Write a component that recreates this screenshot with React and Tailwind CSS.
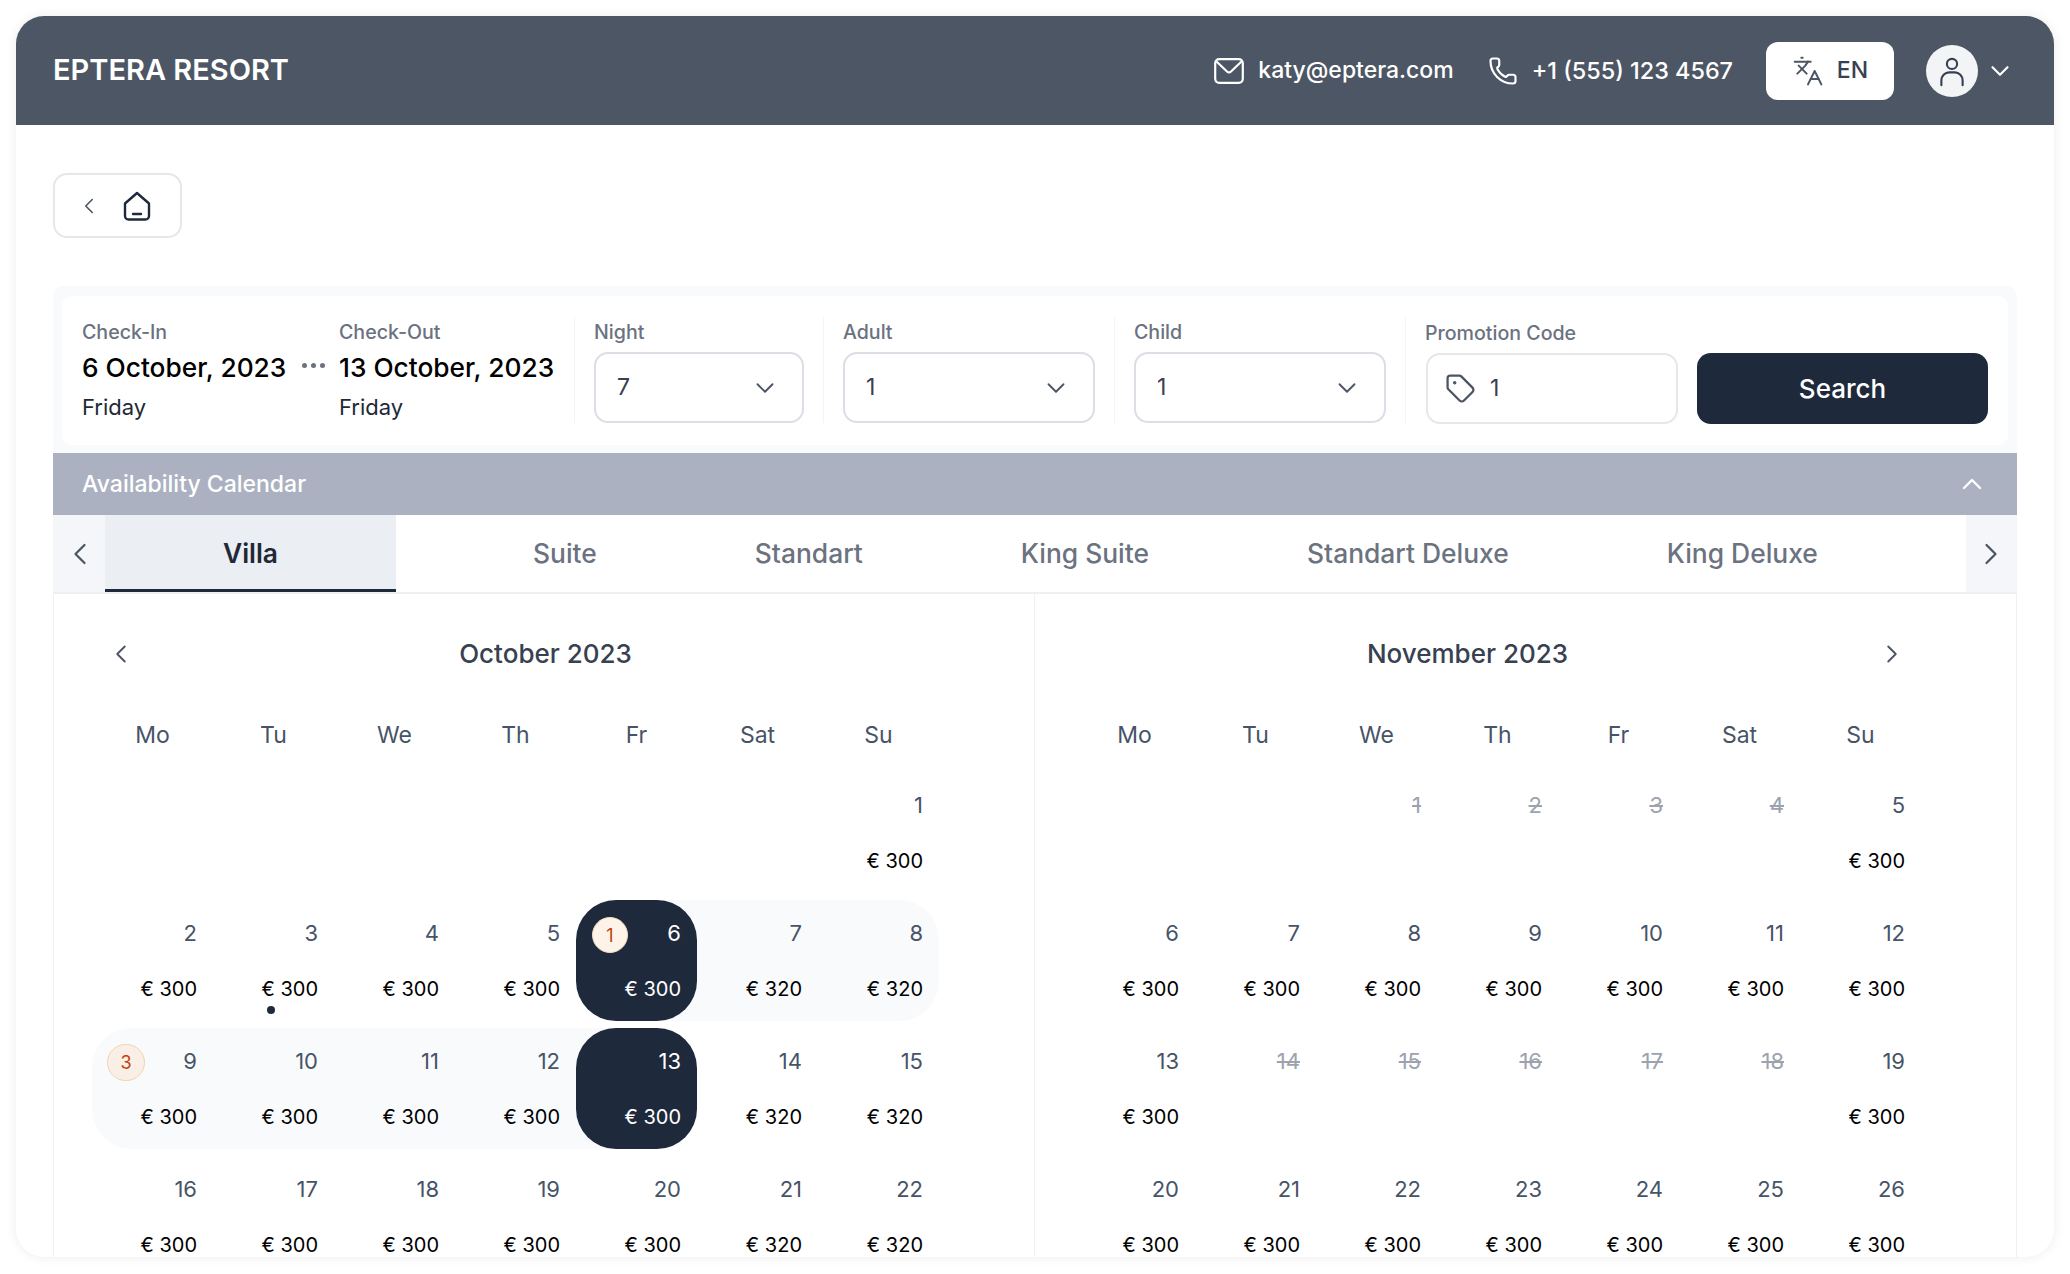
import React from "react";
import { ChevronDown, ChevronLeft, ChevronRight, ChevronUp, Languages, Phone, Tag } from "lucide-react";

const weekDays = ["Mo", "Tu", "We", "Th", "Fr", "Sat", "Su"];
const tabs = ["Suite", "Standart", "King Suite", "Standart Deluxe", "King Deluxe"];

const range = (from, to) => Array.from({ length: to - from + 1 }, (_, i) => from + i);

const octoberDays = [null, null, null, null, null, null, 1, ...range(2, 22)].map((d, i) =>
    d ? { d, price: d > 1 && i % 7 >= 5 ? 320 : 300 } : null
);

const novemberOff = [1, 2, 3, 4, 14, 15, 16, 17, 18];
const novemberDays = [null, null, ...range(1, 26)].map((d) => (d ? { d, off: novemberOff.includes(d), price: 300 } : null));

const cellShape = {
    6: "bg-linear-to-r from-transparent from-50% to-[#f8fafc] to-50%",
    7: "bg-[#f8fafc]",
    8: "bg-[#f8fafc] rounded-r-[40px]",
    9: "bg-[#f8fafc] rounded-l-[40px]",
    10: "bg-[#f8fafc]",
    11: "bg-[#f8fafc]",
    12: "bg-[#f8fafc]",
    13: "bg-linear-to-r from-[#f8fafc] from-50% to-transparent to-50%",
};

const Cell = ({ day, marked }) => {
    if (!day) return <div />;
    const selected = marked && (day.d === 6 || day.d === 13);
    return (
        <div className={`h-[121px] ${marked ? cellShape[day.d] || "" : ""}`}>
            <div className={`relative flex h-full flex-col items-end pr-[16px] pt-[18px] ${selected ? "rounded-[40px] bg-[#1e2a3b]" : ""}`}>
                <span className={`text-[22px] leading-[30px] ${selected ? "text-white" : day.off ? "text-[#9ca3af] line-through" : "text-[#475467]"}`}>{day.d}</span>
                {!day.off && <span className={`mt-[26px] text-[20px] leading-[30px] ${selected ? "text-white" : "text-black"}`}>€ {day.price}</span>}
                {marked && day.d === 6 && (
                    <span className="absolute left-[16px] top-[17px] flex h-[36px] w-[36px] items-center justify-center rounded-full border border-[#f6dcc0] bg-[#fdf3e8] text-[18px] text-[#c2410c]">1</span>
                )}
                {marked && day.d === 9 && (
                    <span className="absolute left-[15px] top-[16px] flex h-[37px] w-[38px] items-center justify-center rounded-full border border-[#f3d3ae] bg-[#f9efe6] text-[18px] text-[#c2410c]">3</span>
                )}
                {marked && day.d === 3 && <span className="absolute left-[54px] top-[106px] h-[8px] w-[8px] rounded-full bg-[#1e2a3b]" />}
            </div>
        </div>
    );
};

const Month = ({ title, days, marked, prev, next, className }) => (
    <div className={className}>
        <div className="flex h-[90px] w-[847px] items-center justify-between px-[14px] pt-[29px]">
            <span className="w-[30px] text-[#4b5563]">{prev && <ChevronLeft className="h-[30px] w-[30px]" strokeWidth={1.5} />}</span>
            <span className={`text-[26px] font-medium text-[#374151] ${prev ? "pl-[60px]" : "pr-[60px]"}`}>{title}</span>
            <span className="w-[30px] text-[#4b5563]">{next && <ChevronRight className="h-[30px] w-[30px]" strokeWidth={1.5} />}</span>
        </div>
        <div className="grid h-[88px] w-[847px] grid-cols-7 items-center pt-[14px] text-center text-[23px] text-[#475467]">
            {weekDays.map((w) => (
                <span key={w}>{w}</span>
            ))}
        </div>
        <div className="grid w-[847px] grid-cols-7 gap-y-[7px]">
            {days.map((day, i) => (
                <Cell key={i} day={day} marked={marked} />
            ))}
        </div>
    </div>
);

const Select = ({ label, value, width }) => (
    <div className="h-[106px] border-l border-[#f3f4f6] px-[19px]">
        <div className="pt-[1px] text-[19.6px] font-medium leading-[28px] text-[#6b7280]">{label}</div>
        <div className={`mt-[6px] flex h-[71px] items-center justify-between rounded-[14px] border-2 border-[#dcdee6] pl-[21px] pr-[22px] text-[23px] text-[#374151] ${width}`}>
            {value}
            <ChevronDown className="h-[30px] w-[30px] text-[#4b5563]" strokeWidth={1.5} />
        </div>
    </div>
);

export default function App() {
    return (
        <div className="h-[1274px] overflow-hidden bg-white px-[16px] pt-[16px] font-[Inter,sans-serif]">
            <div className="flex h-[1241px] flex-col overflow-hidden rounded-[28px] bg-white shadow-[0_0_12px_rgba(17,24,39,0.08)]">
                <header className="flex h-[109px] shrink-0 items-center justify-between bg-[#4d5664] pl-[37px] pr-[39px] text-white">
                    <h1 className="mb-[2px] text-[29px] font-semibold">EPTERA RESORT</h1>
                    <div className="flex items-center text-[23px] font-medium">
                        <svg className="h-[26px] w-[30px]" viewBox="0 0 30 26" fill="none" stroke="currentColor" strokeWidth="2.2" strokeLinejoin="round" strokeLinecap="round">
                            <rect x="1.2" y="1.2" width="27.6" height="23.6" rx="4" />
                            <path d="M3 4l10 9.5a3 3 0 0 0 4 0L27 4" />
                        </svg>
                        <span className="ml-[14px]">katy@eptera.com</span>
                        <Phone className="ml-[34px] h-[30px] w-[30px]" strokeWidth={1.75} />
                        <span className="ml-[14px] text-[23.4px]">+1 (555) 123 4567</span>
                        <button className="ml-[33px] flex h-[58px] w-[128px] items-center justify-center gap-[13px] rounded-[12px] bg-white text-[#374151]">
                            <Languages className="h-[32px] w-[32px] text-[#4b5563]" strokeWidth={1.5} />
                            EN
                        </button>
                        <div className="ml-[32px] flex h-[52px] w-[52px] items-center justify-center rounded-full bg-[#f3f4f6] text-[#374151]">
                            <svg className="h-[34px] w-[34px]" viewBox="0 0 24 24" fill="none" stroke="currentColor" strokeWidth="1.5" strokeLinecap="round">
                                <circle cx="12" cy="7" r="3.6" />
                                <path d="M4.5 22v-3.5a5.5 5.5 0 0 1 5.5-5.5h4a5.5 5.5 0 0 1 5.5 5.5V22" />
                            </svg>
                        </div>
                        <ChevronDown className="ml-[7px] h-[30px] w-[30px]" strokeWidth={1.75} />
                    </div>
                </header>

                <main className="flex min-h-0 flex-1 flex-col px-[37px] pt-[48px]">
                    <button className="flex h-[65px] w-[129px] shrink-0 items-center gap-[21px] rounded-[14px] border-2 border-[#e5e7eb] pl-[21px] text-[#4b5563]">
                        <ChevronLeft className="h-[26px] w-[26px]" strokeWidth={1.5} />
                        <svg className="h-[30px] w-[28px]" viewBox="0 0 28 30" fill="none" stroke="#1e2a3b" strokeWidth="2.4" strokeLinejoin="round" strokeLinecap="round">
                            <path d="M2 12.5L14 2l12 10.5V25a3.5 3.5 0 0 1-3.5 3.5h-17A3.5 3.5 0 0 1 2 25z" />
                            <path d="M10 23h8" />
                        </svg>
                    </button>

                    <section className="mt-[48px] h-[167px] shrink-0 rounded-t-[10px] bg-[#f9fafb] px-[9px] pb-[8px] pt-[10px]">
                        <div className="flex h-[149px] items-start rounded-[10px] bg-white pl-[20px] pt-[21px]">
                            <div className="flex w-[492px]">
                                <div className="w-[219px]">
                                    <div className="pt-[1px] text-[19.6px] font-medium leading-[28px] text-[#6b7280]">Check-In</div>
                                    <div className="mt-[4px] whitespace-nowrap text-[26.3px] font-medium leading-[36px] text-black">6 October, 2023</div>
                                    <div className="mt-[5px] text-[22px] leading-[32px] text-[#1f2937]">Friday</div>
                                </div>
                                <div className="flex w-[38px] items-center pb-[10px]">
                                    <span className="flex gap-[4px] pl-[1px]">
                                        <i className="h-[5px] w-[5px] rounded-full bg-[#6b7280]" />
                                        <i className="h-[5px] w-[5px] rounded-full bg-[#6b7280]" />
                                        <i className="h-[5px] w-[5px] rounded-full bg-[#6b7280]" />
                                    </span>
                                </div>
                                <div>
                                    <div className="pt-[1px] text-[19.6px] font-medium leading-[28px] text-[#6b7280]">Check-Out</div>
                                    <div className="mt-[4px] whitespace-nowrap text-[26.3px] font-medium leading-[36px] text-black">13 October, 2023</div>
                                    <div className="mt-[5px] text-[22px] leading-[32px] text-[#1f2937]">Friday</div>
                                </div>
                            </div>
                            <Select label="Night" value="7" width="w-[210px]" />
                            <Select label="Adult" value="1" width="w-[252px]" />
                            <Select label="Child" value="1" width="w-[252px]" />
                            <div className="h-[106px] border-l border-[#f3f4f6] pl-[19px] pt-[2px]">
                                <div className="text-[19.6px] font-medium leading-[28px] text-[#6b7280]">Promotion Code</div>
                                <div className="ml-[1px] mt-[6px] flex items-center gap-[19px]">
                                    <div className="flex h-[71px] w-[252px] items-center gap-[14px] rounded-[14px] border-2 border-[#e5e7eb] pl-[17px] text-[23px] text-[#374151]">
                                        <Tag className="h-[31px] w-[31px] text-[#4b5563]" strokeWidth={1.75} />1
                                    </div>
                                    <button className="h-[71px] w-[291px] rounded-[14px] bg-[#1e2a3b] text-[26px] font-medium text-white">Search</button>
                                </div>
                            </div>
                        </div>
                    </section>

                    <div className="flex h-[62px] shrink-0 items-center justify-between bg-[#abb1c1] pl-[29px] pr-[29px] text-white">
                        <span className="text-[23px] font-medium">Availability Calendar</span>
                        <ChevronUp className="h-[32px] w-[32px]" strokeWidth={1.75} />
                    </div>

                    <nav className="flex h-[79px] shrink-0 border-x border-[#f3f4f6] border-b-2 border-b-[#eeeff2] text-[26.4px] font-medium text-[#6b7280]">
                        <div className="flex w-[51px] items-center justify-center bg-[#f4f6fa]">
                            <ChevronLeft className="h-[36px] w-[36px] text-[#4b5563]" strokeWidth={1.5} />
                        </div>
                        <div className="flex w-[291px] items-center justify-center border-b-[3px] border-[#1e2a3b] bg-[#ebeef3] pt-[3px] font-semibold text-[#1f2937]">Villa</div>
                        <div className="flex flex-1 items-center gap-[158px] pl-[137px]">
                            {tabs.map((t) => (
                                <span key={t} className="whitespace-nowrap">{t}</span>
                            ))}
                        </div>
                        <div className="flex w-[50px] items-center justify-center bg-[#f4f6fa]">
                            <ChevronRight className="h-[36px] w-[36px] text-[#4b5563]" strokeWidth={1.5} />
                        </div>
                    </nav>

                    <div className="flex min-h-0 flex-1 overflow-hidden border-x border-[#eef0f3]">
                        <Month title="October 2023" days={octoberDays} marked prev className="w-[980px] shrink-0 pl-[38px]" />
                        <Month title="November 2023" days={novemberDays} next className="flex-1 border-l border-[#eef0f3] pl-[39px]" />
                    </div>
                </main>
            </div>
        </div>
    );
}
